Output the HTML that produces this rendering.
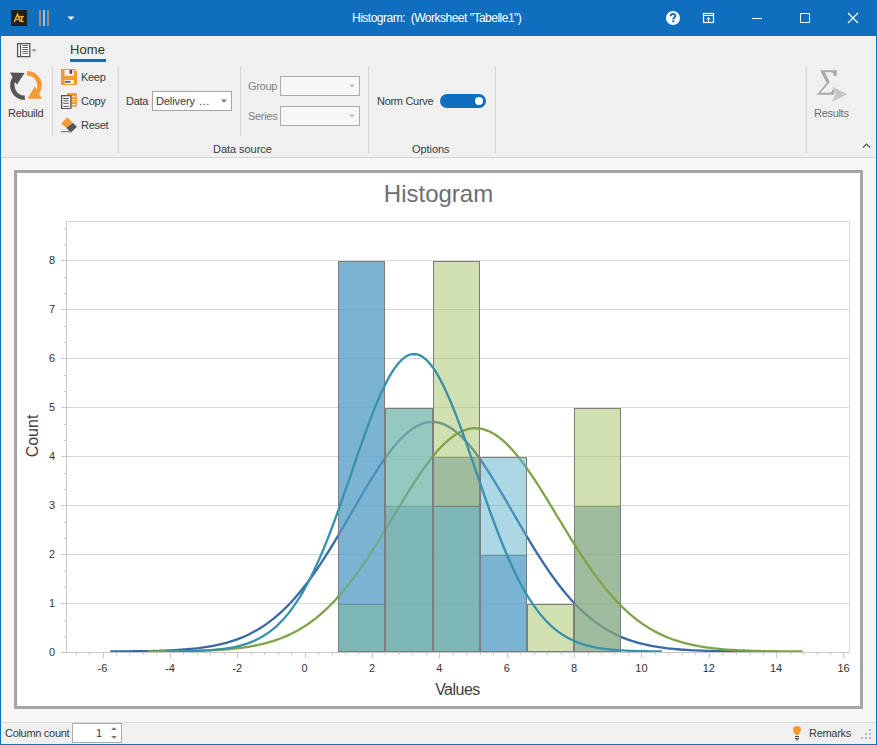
<!DOCTYPE html>
<html><head><meta charset="utf-8"><style>
*{margin:0;padding:0;box-sizing:border-box}
html,body{width:877px;height:745px;overflow:hidden;background:#f0f0f0;font-family:"Liberation Sans", sans-serif;}
.a{position:absolute;white-space:nowrap}
.t11{font-size:11px;letter-spacing:-0.3px;color:#3a3a3a}
</style></head><body>
<div class="a" style="left:0;top:0;width:877px;height:745px;border:1px solid #106ebe;border-top:0"></div>
<!-- title bar -->
<div class="a" style="left:0;top:0;width:877px;height:36px;background:#106ebe"></div>
<div class="a" style="left:11px;top:10px;width:16px;height:16px;background:#231f1b"></div>
<svg class="a" style="left:11px;top:10px" width="16" height="16"><g stroke="#f2a23a" fill="none"><path d="M3.2 12 L6.6 4.3 L9.4 12" stroke-width="1.6"/><path d="M4.8 9.6 H8.2" stroke-width="1.1"/><path d="M7 6.6 H13" stroke-width="1.4"/><path d="M10.6 6.6 V12" stroke-width="1.7"/><path d="M9 11.6 H13" stroke-width="1"/></g></svg>
<div class="a" style="left:39px;top:10px;width:2px;height:16px;background:#a08f74"></div>
<div class="a" style="left:43px;top:10px;width:2px;height:16px;background:#9cc3ea"></div>
<div class="a" style="left:47px;top:10px;width:2px;height:16px;background:#a08f74"></div>
<svg class="a" style="left:67px;top:16px" width="8" height="5"><path d="M0.5 0.5 L7.5 0.5 L4 4 Z" fill="#fff"/></svg>
<div class="a" style="left:352px;top:11px;font-size:12px;letter-spacing:-0.5px;color:#fff">Histogram:&nbsp; (Worksheet "Tabelle1")</div>
<svg class="a" style="left:665px;top:10px" width="16" height="16"><circle cx="8" cy="8" r="7" fill="#fff"/><path d="M5.9 6.2 C5.9 4.7 6.9 3.9 8.1 3.9 C9.4 3.9 10.3 4.7 10.3 5.9 C10.3 7.5 8.3 7.6 8.3 9.5" fill="none" stroke="#106ebe" stroke-width="1.9"/><rect x="7.3" y="10.4" width="2" height="1.9" fill="#106ebe"/></svg>
<svg class="a" style="left:702px;top:12px" width="14" height="13"><rect x="1.5" y="1.5" width="10" height="9" fill="none" stroke="#fff" stroke-width="1.2"/><line x1="1.5" y1="3.5" x2="11.5" y2="3.5" stroke="#fff"/><path d="M6.5 10.5 V5.5 M4.5 7.5 L6.5 5.5 L8.5 7.5" stroke="#fff" fill="none"/></svg>
<div class="a" style="left:752px;top:18px;width:10px;height:1px;background:#fff"></div>
<div class="a" style="left:800px;top:13px;width:10px;height:10px;border:1px solid #fff"></div>
<svg class="a" style="left:847px;top:12px" width="12" height="12"><path d="M1 1 L11 11 M11 1 L1 11" stroke="#fff" stroke-width="1.1"/></svg>

<!-- ribbon -->
<div class="a" style="left:1px;top:36px;width:875px;height:121px;background:#f0f0f0"></div>
<div class="a" style="left:1px;top:157px;width:875px;height:1px;background:#d4d4d4"></div>
<svg class="a" style="left:16px;top:42px" width="24" height="16"><rect x="1.6" y="1.6" width="12.2" height="13" fill="#fff" stroke="#555" stroke-width="1.3"/><line x1="4.6" y1="1.5" x2="4.6" y2="14.5" stroke="#555" stroke-width="1.1"/><path d="M6.4 3.5H12M6.4 5.5H12M6.4 7.5H12M6.4 9.4H12M6.4 11.4H12" stroke="#555" stroke-width="0.9"/><path d="M15.2 7.2 L20.8 7.2 L18 10Z" fill="#9a9a9a"/></svg>
<div class="a" style="left:70px;top:42px;font-size:13px;color:#333;letter-spacing:0.1px">Home</div>
<div class="a" style="left:70px;top:59px;width:36px;height:3px;background:#106ebe"></div>

<!-- separators -->
<div class="a" style="left:52px;top:66px;width:1px;height:70px;background:#d4d4d4"></div>
<div class="a" style="left:118px;top:66px;width:1px;height:87px;background:#d4d4d4"></div>
<div class="a" style="left:240px;top:66px;width:1px;height:70px;background:#d4d4d4"></div>
<div class="a" style="left:368px;top:66px;width:1px;height:87px;background:#d4d4d4"></div>
<div class="a" style="left:495px;top:66px;width:1px;height:87px;background:#d4d4d4"></div>
<div class="a" style="left:806px;top:66px;width:1px;height:87px;background:#d4d4d4"></div>

<!-- rebuild icon -->
<svg class="a" style="left:9px;top:69px" width="34" height="34">
<path d="M15.8 28.7 A12.2 12.2 0 0 1 6.9 7.9" fill="none" stroke="#555" stroke-width="4.6"/>
<path d="M1 3.6 L15.5 4 L7.9 15.8 Z" fill="#555"/>
<path d="M18 4.2 A12.3 12.3 0 0 1 26.9 25.2" fill="none" stroke="#f39a30" stroke-width="4.6"/>
<path d="M18.5 29.8 L33 29.8 L25.7 17.5 Z" fill="#f39a30"/>
</svg>
<div class="a t11" style="left:8px;top:107px">Rebuild</div>

<!-- keep copy reset -->
<svg class="a" style="left:61px;top:69px" width="16" height="16"><path d="M0 0 H13.6 L16 2.4 V16 H0 Z" fill="#f39a30"/><rect x="3.6" y="1" width="9.2" height="5.7" fill="#f4f4f4"/><rect x="8.6" y="1" width="2.6" height="3.8" fill="#4a4a4a"/><rect x="3.6" y="11" width="9.2" height="3.9" fill="#f4f4f4"/><rect x="3.9" y="11.9" width="5.8" height="1.9" fill="#666"/></svg>
<div class="a t11" style="left:81px;top:71px">Keep</div>
<svg class="a" style="left:61px;top:93px" width="16" height="16"><rect x="6" y="0" width="9.9" height="13.7" fill="#f39a30"/><path d="M10.3 3.5H14.6M10.3 6.5H14.6M10.3 8.5H14.6M10.3 11.5H14.6" stroke="#fbe3c4" stroke-width="1"/><rect x="0.65" y="2.65" width="9.2" height="13" fill="#fafafa" stroke="#555" stroke-width="1.3"/><path d="M2.3 5.5H7.8M2.3 7.8H7.8M2.3 10.3H7.8M2.3 13.4H7.8" stroke="#555" stroke-width="1"/></svg>
<div class="a t11" style="left:81px;top:95px">Copy</div>
<svg class="a" style="left:61px;top:117px" width="16" height="16"><path d="M0.1 6.7 L6.3 0.3 L12.1 6.1 L5.2 10.7 Z" fill="#f39a30"/><path d="M5.2 10.7 L12.1 6.1 L15.9 9.8 L10.3 15.2 L9.5 15.2 Z" fill="#555"/><rect x="0" y="13.9" width="10.3" height="1.4" fill="#888"/></svg>
<div class="a t11" style="left:81px;top:119px">Reset</div>

<!-- data -->
<div class="a t11" style="left:126px;top:95px">Data</div>
<div class="a" style="left:152px;top:91px;width:80px;height:20px;background:#fff;border:1px solid #a6a6a6"></div>
<div class="a t11" style="left:156px;top:95px;letter-spacing:-0.1px">Delivery</div><div class="a t11" style="left:199px;top:95px;letter-spacing:0.6px">...</div>
<svg class="a" style="left:221px;top:99px" width="7" height="5"><path d="M0 0.6 H6 L3 3.8 Z" fill="#7a7a7a"/></svg>
<div class="a t11" style="left:213px;top:143px;letter-spacing:-0.05px">Data source</div>

<div class="a t11" style="left:248px;top:80px;color:#808080">Group</div>
<div class="a" style="left:280px;top:76px;width:80px;height:20px;background:#f7f7f7;border:1px solid #ababab"></div>
<svg class="a" style="left:349px;top:84px" width="7" height="5"><path d="M0 0.6 H6 L3 3.8 Z" fill="#c0c0c0"/></svg>
<div class="a t11" style="left:248px;top:110px;color:#808080">Series</div>
<div class="a" style="left:280px;top:106px;width:80px;height:20px;background:#f7f7f7;border:1px solid #ababab"></div>
<svg class="a" style="left:349px;top:114px" width="7" height="5"><path d="M0 0.6 H6 L3 3.8 Z" fill="#c0c0c0"/></svg>

<div class="a t11" style="left:377px;top:95px">Norm Curve</div>
<div class="a" style="left:440px;top:94px;width:46px;height:14px;border-radius:7px;background:#106ebe"></div>
<div class="a" style="left:475px;top:97px;width:8px;height:8px;border-radius:4px;background:#fff"></div>
<div class="a t11" style="left:412px;top:143px;letter-spacing:-0.05px">Options</div>

<svg class="a" style="left:815px;top:68px" width="36" height="36">
<path d="M5.05 2.3 L21.97 2.3 L21.4 7.9 L19 7.9 L18.3 5.6 L16.9 4.2 L9.9 4.2 L14.7 14.1 L5.6 24.85 L15.25 24.85 L16.9 23.4 L17.4 21.6 L19 21.6 L19 26.7 L1.8 26.7 L11.6 15 Z" fill="#a9a9a9"/>
<path d="M17.4 18.4 L32.4 26.2 L17.1 33.7 L20.3 26.3 Z" fill="#c6c6c6"/>
</svg>
<div class="a t11" style="left:814px;top:107px;color:#6e6e6e">Results</div>
<svg class="a" style="left:862px;top:142px" width="10" height="7"><path d="M1 5.5 L4.5 2 L8 5.5" fill="none" stroke="#555" stroke-width="1.1"/></svg>

<!-- content -->
<div class="a" style="left:1px;top:158px;width:875px;height:564px;background:#f7f7f7"></div>
<div class="a" style="left:14px;top:170px;width:849px;height:539px;border:3px solid #a6a6a6;background:#fff"></div>
<svg class="a" style="left:0;top:0" width="877" height="745" font-family="Liberation Sans">
<line x1="66" y1="603.5" x2="850" y2="603.5" stroke="#d9d9d9" stroke-width="1"/>
<line x1="66" y1="554.5" x2="850" y2="554.5" stroke="#d9d9d9" stroke-width="1"/>
<line x1="66" y1="505.5" x2="850" y2="505.5" stroke="#d9d9d9" stroke-width="1"/>
<line x1="66" y1="456.5" x2="850" y2="456.5" stroke="#d9d9d9" stroke-width="1"/>
<line x1="66" y1="407.5" x2="850" y2="407.5" stroke="#d9d9d9" stroke-width="1"/>
<line x1="66" y1="358.5" x2="850" y2="358.5" stroke="#d9d9d9" stroke-width="1"/>
<line x1="66" y1="309.5" x2="850" y2="309.5" stroke="#d9d9d9" stroke-width="1"/>
<line x1="66" y1="260.5" x2="850" y2="260.5" stroke="#d9d9d9" stroke-width="1"/>
<line x1="66" y1="221.5" x2="849.5" y2="221.5" stroke="#d9d9d9"/>
<line x1="849.5" y1="221" x2="849.5" y2="652" stroke="#d9d9d9"/>
<rect x="339" y="262" width="45" height="389" fill="rgb(60, 112, 178)" fill-opacity="0.5"/>
<rect x="338.5" y="261.5" width="46" height="390" fill="none" stroke="#7d7d7d" stroke-width="1"/>
<rect x="386" y="507" width="46" height="144" fill="rgb(60, 112, 178)" fill-opacity="0.5"/>
<rect x="385.5" y="506.5" width="47" height="145" fill="none" stroke="#7d7d7d" stroke-width="1"/>
<rect x="434" y="458" width="45" height="193" fill="rgb(60, 112, 178)" fill-opacity="0.5"/>
<rect x="433.5" y="457.5" width="46" height="194" fill="none" stroke="#7d7d7d" stroke-width="1"/>
<rect x="481" y="556" width="45" height="95" fill="rgb(60, 112, 178)" fill-opacity="0.5"/>
<rect x="480.5" y="555.5" width="46" height="96" fill="none" stroke="#7d7d7d" stroke-width="1"/>
<rect x="575" y="507" width="45" height="144" fill="rgb(60, 112, 178)" fill-opacity="0.5"/>
<rect x="574.5" y="506.5" width="46" height="145" fill="none" stroke="#7d7d7d" stroke-width="1"/>
<polyline fill="none" stroke="#3a6aa5" stroke-width="2.3" stroke-linejoin="round" points="110.27,651.42 113.49,651.41 116.71,651.39 119.93,651.38 123.15,651.36 126.37,651.33 129.59,651.30 132.81,651.27 136.02,651.24 139.24,651.20 142.46,651.15 145.68,651.09 148.90,651.03 152.12,650.96 155.34,650.88 158.56,650.79 161.78,650.69 165.00,650.57 168.22,650.44 171.44,650.29 174.66,650.13 177.88,649.94 181.10,649.73 184.32,649.50 187.54,649.24 190.76,648.95 193.98,648.63 197.20,648.27 200.42,647.87 203.64,647.43 206.86,646.95 210.08,646.41 213.30,645.82 216.52,645.17 219.74,644.46 222.96,643.69 226.18,642.84 229.40,641.91 232.62,640.90 235.84,639.80 239.06,638.62 242.28,637.33 245.50,635.94 248.72,634.44 251.94,632.83 255.16,631.09 258.38,629.23 261.60,627.24 264.82,625.12 268.04,622.85 271.26,620.44 274.48,617.88 277.70,615.17 280.92,612.30 284.14,609.27 287.36,606.08 290.58,602.73 293.80,599.21 297.02,595.53 300.24,591.69 303.45,587.69 306.67,583.52 309.89,579.20 313.11,574.73 316.33,570.12 319.55,565.36 322.77,560.47 325.99,555.46 329.21,550.33 332.43,545.10 335.65,539.78 338.87,534.38 342.09,528.92 345.31,523.40 348.53,517.86 351.75,512.29 354.97,506.73 358.19,501.18 361.41,495.67 364.63,490.22 367.85,484.84 371.07,479.56 374.29,474.39 377.51,469.36 380.73,464.49 383.95,459.79 387.17,455.29 390.39,451.01 393.61,446.96 396.83,443.16 400.05,439.63 403.27,436.39 406.49,433.44 409.71,430.81 412.93,428.50 416.15,426.53 419.37,424.90 422.59,423.63 425.81,422.72 429.03,422.17 432.25,421.98 435.47,422.17 438.69,422.72 441.91,423.63 445.13,424.90 448.35,426.53 451.57,428.50 454.79,430.81 458.01,433.44 461.23,436.39 464.45,439.63 467.67,443.16 470.88,446.96 474.10,451.01 477.32,455.29 480.54,459.79 483.76,464.49 486.98,469.36 490.20,474.39 493.42,479.56 496.64,484.84 499.86,490.22 503.08,495.67 506.30,501.18 509.52,506.73 512.74,512.29 515.96,517.86 519.18,523.40 522.40,528.92 525.62,534.38 528.84,539.78 532.06,545.10 535.28,550.33 538.50,555.46 541.72,560.47 544.94,565.36 548.16,570.12 551.38,574.73 554.60,579.20 557.82,583.52 561.04,587.69 564.26,591.69 567.48,595.53 570.70,599.21 573.92,602.73 577.14,606.08 580.36,609.27 583.58,612.30 586.80,615.17 590.02,617.88 593.24,620.44 596.46,622.85 599.68,625.12 602.90,627.24 606.12,629.23 609.34,631.09 612.56,632.83 615.78,634.44 619.00,635.94 622.22,637.33 625.44,638.62 628.66,639.80 631.88,640.90 635.10,641.91 638.31,642.84 641.53,643.69 644.75,644.46 647.97,645.17 651.19,645.82 654.41,646.41 657.63,646.95 660.85,647.43 664.07,647.87 667.29,648.27 670.51,648.63 673.73,648.95 676.95,649.24 680.17,649.50 683.39,649.73 686.61,649.94 689.83,650.13 693.05,650.29 696.27,650.44 699.49,650.57 702.71,650.69 705.93,650.79 709.15,650.88 712.37,650.96 715.59,651.03 718.81,651.09 722.03,651.15 725.25,651.20 728.47,651.24 731.69,651.27 734.91,651.30 738.13,651.33 741.35,651.36 744.57,651.38 747.79,651.39 751.01,651.41 754.23,651.42"/>
<rect x="339" y="605" width="45" height="46" fill="rgb(163, 193, 99)" fill-opacity="0.5"/>
<rect x="338.5" y="604.5" width="46" height="47" fill="none" stroke="#7d7d7d" stroke-width="1"/>
<rect x="386" y="409" width="46" height="242" fill="rgb(163, 193, 99)" fill-opacity="0.5"/>
<rect x="385.5" y="408.5" width="47" height="243" fill="none" stroke="#7d7d7d" stroke-width="1"/>
<rect x="434" y="262" width="45" height="389" fill="rgb(163, 193, 99)" fill-opacity="0.5"/>
<rect x="433.5" y="261.5" width="46" height="390" fill="none" stroke="#7d7d7d" stroke-width="1"/>
<rect x="528" y="605" width="45" height="46" fill="rgb(163, 193, 99)" fill-opacity="0.5"/>
<rect x="527.5" y="604.5" width="46" height="47" fill="none" stroke="#7d7d7d" stroke-width="1"/>
<rect x="575" y="409" width="45" height="242" fill="rgb(163, 193, 99)" fill-opacity="0.5"/>
<rect x="574.5" y="408.5" width="46" height="243" fill="none" stroke="#7d7d7d" stroke-width="1"/>
<polyline fill="none" stroke="#7fa349" stroke-width="2.3" stroke-linejoin="round" points="148.29,651.43 151.56,651.41 154.83,651.40 158.10,651.38 161.38,651.36 164.65,651.34 167.92,651.31 171.19,651.28 174.46,651.24 177.73,651.20 181.00,651.16 184.27,651.10 187.54,651.04 190.81,650.98 194.09,650.90 197.36,650.81 200.63,650.71 203.90,650.60 207.17,650.47 210.44,650.33 213.71,650.17 216.98,649.98 220.25,649.78 223.52,649.55 226.80,649.30 230.07,649.02 233.34,648.71 236.61,648.36 239.88,647.97 243.15,647.54 246.42,647.07 249.69,646.55 252.96,645.97 256.23,645.34 259.51,644.65 262.78,643.90 266.05,643.07 269.32,642.17 272.59,641.19 275.86,640.12 279.13,638.97 282.40,637.71 285.67,636.36 288.94,634.90 292.22,633.33 295.49,631.64 298.76,629.84 302.03,627.90 305.30,625.83 308.57,623.63 311.84,621.28 315.11,618.79 318.38,616.15 321.65,613.36 324.93,610.41 328.20,607.31 331.47,604.05 334.74,600.63 338.01,597.05 341.28,593.31 344.55,589.42 347.82,585.37 351.09,581.16 354.36,576.81 357.64,572.32 360.91,567.70 364.18,562.94 367.45,558.06 370.72,553.08 373.99,547.99 377.26,542.81 380.53,537.56 383.80,532.24 387.07,526.88 390.35,521.48 393.62,516.07 396.89,510.65 400.16,505.25 403.43,499.89 406.70,494.59 409.97,489.36 413.24,484.22 416.51,479.19 419.78,474.30 423.06,469.56 426.33,464.99 429.60,460.61 432.87,456.44 436.14,452.50 439.41,448.81 442.68,445.37 445.95,442.22 449.22,439.35 452.49,436.79 455.77,434.55 459.04,432.63 462.31,431.05 465.58,429.81 468.85,428.92 472.12,428.39 475.39,428.21 478.66,428.39 481.93,428.92 485.20,429.81 488.48,431.05 491.75,432.63 495.02,434.55 498.29,436.79 501.56,439.35 504.83,442.22 508.10,445.37 511.37,448.81 514.64,452.50 517.91,456.44 521.19,460.61 524.46,464.99 527.73,469.56 531.00,474.30 534.27,479.19 537.54,484.22 540.81,489.36 544.08,494.59 547.35,499.89 550.62,505.25 553.90,510.65 557.17,516.07 560.44,521.48 563.71,526.88 566.98,532.24 570.25,537.56 573.52,542.81 576.79,547.99 580.06,553.08 583.33,558.06 586.61,562.94 589.88,567.70 593.15,572.32 596.42,576.81 599.69,581.16 602.96,585.37 606.23,589.42 609.50,593.31 612.77,597.05 616.04,600.63 619.32,604.05 622.59,607.31 625.86,610.41 629.13,613.36 632.40,616.15 635.67,618.79 638.94,621.28 642.21,623.63 645.48,625.83 648.75,627.90 652.03,629.84 655.30,631.64 658.57,633.33 661.84,634.90 665.11,636.36 668.38,637.71 671.65,638.97 674.92,640.12 678.19,641.19 681.46,642.17 684.74,643.07 688.01,643.90 691.28,644.65 694.55,645.34 697.82,645.97 701.09,646.55 704.36,647.07 707.63,647.54 710.90,647.97 714.17,648.36 717.45,648.71 720.72,649.02 723.99,649.30 727.26,649.55 730.53,649.78 733.80,649.98 737.07,650.17 740.34,650.33 743.61,650.47 746.88,650.60 750.16,650.71 753.43,650.81 756.70,650.90 759.97,650.98 763.24,651.04 766.51,651.10 769.78,651.16 773.05,651.20 776.32,651.24 779.59,651.28 782.87,651.31 786.14,651.34 789.41,651.36 792.68,651.38 795.95,651.40 799.22,651.41 802.49,651.43"/>
<rect x="339" y="262" width="45" height="389" fill="rgb(89, 177, 205)" fill-opacity="0.5"/>
<rect x="338.5" y="261.5" width="46" height="390" fill="none" stroke="#7d7d7d" stroke-width="1"/>
<rect x="386" y="409" width="46" height="242" fill="rgb(89, 177, 205)" fill-opacity="0.5"/>
<rect x="385.5" y="408.5" width="47" height="243" fill="none" stroke="#7d7d7d" stroke-width="1"/>
<rect x="434" y="507" width="45" height="144" fill="rgb(89, 177, 205)" fill-opacity="0.5"/>
<rect x="433.5" y="506.5" width="46" height="145" fill="none" stroke="#7d7d7d" stroke-width="1"/>
<rect x="481" y="458" width="45" height="193" fill="rgb(89, 177, 205)" fill-opacity="0.5"/>
<rect x="480.5" y="457.5" width="46" height="194" fill="none" stroke="#7d7d7d" stroke-width="1"/>
<polyline fill="none" stroke="#3891ab" stroke-width="2.3" stroke-linejoin="round" points="166.11,651.40 168.59,651.38 171.07,651.36 173.54,651.34 176.02,651.31 178.50,651.28 180.98,651.25 183.46,651.21 185.94,651.16 188.42,651.11 190.90,651.04 193.38,650.97 195.85,650.89 198.33,650.80 200.81,650.70 203.29,650.58 205.77,650.45 208.25,650.30 210.73,650.13 213.21,649.94 215.68,649.72 218.16,649.48 220.64,649.21 223.12,648.91 225.60,648.57 228.08,648.20 230.56,647.78 233.04,647.31 235.52,646.80 237.99,646.23 240.47,645.60 242.95,644.90 245.43,644.14 247.91,643.30 250.39,642.38 252.87,641.37 255.35,640.27 257.83,639.07 260.30,637.76 262.78,636.34 265.26,634.80 267.74,633.13 270.22,631.33 272.70,629.39 275.18,627.30 277.66,625.05 280.13,622.64 282.61,620.06 285.09,617.30 287.57,614.37 290.05,611.24 292.53,607.92 295.01,604.41 297.49,600.69 299.97,596.76 302.44,592.63 304.92,588.28 307.40,583.73 309.88,578.96 312.36,573.98 314.84,568.79 317.32,563.39 319.80,557.80 322.28,552.00 324.75,546.02 327.23,539.85 329.71,533.52 332.19,527.02 334.67,520.38 337.15,513.60 339.63,506.70 342.11,499.70 344.58,492.62 347.06,485.47 349.54,478.28 352.02,471.07 354.50,463.86 356.98,456.67 359.46,449.53 361.94,442.46 364.42,435.49 366.89,428.64 369.37,421.94 371.85,415.43 374.33,409.11 376.81,403.02 379.29,397.19 381.77,391.64 384.25,386.39 386.73,381.47 389.20,376.89 391.68,372.69 394.16,368.87 396.64,365.46 399.12,362.47 401.60,359.91 404.08,357.80 406.56,356.16 409.03,354.97 411.51,354.26 413.99,354.02 416.47,354.26 418.95,354.97 421.43,356.16 423.91,357.80 426.39,359.91 428.87,362.47 431.34,365.46 433.82,368.87 436.30,372.69 438.78,376.89 441.26,381.47 443.74,386.39 446.22,391.64 448.70,397.19 451.18,403.02 453.65,409.11 456.13,415.43 458.61,421.94 461.09,428.64 463.57,435.49 466.05,442.46 468.53,449.53 471.01,456.67 473.48,463.86 475.96,471.07 478.44,478.28 480.92,485.47 483.40,492.62 485.88,499.70 488.36,506.70 490.84,513.60 493.32,520.38 495.79,527.02 498.27,533.52 500.75,539.85 503.23,546.02 505.71,552.00 508.19,557.80 510.67,563.39 513.15,568.79 515.63,573.98 518.10,578.96 520.58,583.73 523.06,588.28 525.54,592.63 528.02,596.76 530.50,600.69 532.98,604.41 535.46,607.92 537.94,611.24 540.41,614.37 542.89,617.30 545.37,620.06 547.85,622.64 550.33,625.05 552.81,627.30 555.29,629.39 557.77,631.33 560.24,633.13 562.72,634.80 565.20,636.34 567.68,637.76 570.16,639.07 572.64,640.27 575.12,641.37 577.60,642.38 580.08,643.30 582.55,644.14 585.03,644.90 587.51,645.60 589.99,646.23 592.47,646.80 594.95,647.31 597.43,647.78 599.91,648.20 602.39,648.57 604.86,648.91 607.34,649.21 609.82,649.48 612.30,649.72 614.78,649.94 617.26,650.13 619.74,650.30 622.22,650.45 624.69,650.58 627.17,650.70 629.65,650.80 632.13,650.89 634.61,650.97 637.09,651.04 639.57,651.11 642.05,651.16 644.53,651.21 647.00,651.25 649.48,651.28 651.96,651.31 654.44,651.34 656.92,651.36 659.40,651.38 661.88,651.40"/>
<line x1="66.5" y1="221" x2="66.5" y2="653" stroke="#c8c8c8"/>
<line x1="61" y1="652.5" x2="850" y2="652.5" stroke="#c8c8c8"/>
<line x1="61" y1="652.5" x2="66" y2="652.5" stroke="#c8c8c8"/>
<line x1="61" y1="603.5" x2="66" y2="603.5" stroke="#c8c8c8"/>
<line x1="61" y1="554.5" x2="66" y2="554.5" stroke="#c8c8c8"/>
<line x1="61" y1="505.5" x2="66" y2="505.5" stroke="#c8c8c8"/>
<line x1="61" y1="456.5" x2="66" y2="456.5" stroke="#c8c8c8"/>
<line x1="61" y1="407.5" x2="66" y2="407.5" stroke="#c8c8c8"/>
<line x1="61" y1="358.5" x2="66" y2="358.5" stroke="#c8c8c8"/>
<line x1="61" y1="309.5" x2="66" y2="309.5" stroke="#c8c8c8"/>
<line x1="61" y1="260.5" x2="66" y2="260.5" stroke="#c8c8c8"/>
<line x1="64" y1="636.5" x2="66" y2="636.5" stroke="#c8c8c8"/>
<line x1="64" y1="620.5" x2="66" y2="620.5" stroke="#c8c8c8"/>
<line x1="64" y1="587.5" x2="66" y2="587.5" stroke="#c8c8c8"/>
<line x1="64" y1="571.5" x2="66" y2="571.5" stroke="#c8c8c8"/>
<line x1="64" y1="538.5" x2="66" y2="538.5" stroke="#c8c8c8"/>
<line x1="64" y1="522.5" x2="66" y2="522.5" stroke="#c8c8c8"/>
<line x1="64" y1="489.5" x2="66" y2="489.5" stroke="#c8c8c8"/>
<line x1="64" y1="473.5" x2="66" y2="473.5" stroke="#c8c8c8"/>
<line x1="64" y1="440.5" x2="66" y2="440.5" stroke="#c8c8c8"/>
<line x1="64" y1="424.5" x2="66" y2="424.5" stroke="#c8c8c8"/>
<line x1="64" y1="391.5" x2="66" y2="391.5" stroke="#c8c8c8"/>
<line x1="64" y1="375.5" x2="66" y2="375.5" stroke="#c8c8c8"/>
<line x1="64" y1="342.5" x2="66" y2="342.5" stroke="#c8c8c8"/>
<line x1="64" y1="326.5" x2="66" y2="326.5" stroke="#c8c8c8"/>
<line x1="64" y1="293.5" x2="66" y2="293.5" stroke="#c8c8c8"/>
<line x1="64" y1="277.5" x2="66" y2="277.5" stroke="#c8c8c8"/>
<line x1="64" y1="244.5" x2="66" y2="244.5" stroke="#c8c8c8"/>
<line x1="64" y1="228.5" x2="66" y2="228.5" stroke="#c8c8c8"/>
<line x1="76.5" y1="652" x2="76.5" y2="655" stroke="#c8c8c8"/>
<line x1="89.5" y1="652" x2="89.5" y2="655" stroke="#c8c8c8"/>
<line x1="103.5" y1="652" x2="103.5" y2="658" stroke="#c8c8c8"/>
<line x1="116.5" y1="652" x2="116.5" y2="655" stroke="#c8c8c8"/>
<line x1="129.5" y1="652" x2="129.5" y2="655" stroke="#c8c8c8"/>
<line x1="143.5" y1="652" x2="143.5" y2="655" stroke="#c8c8c8"/>
<line x1="156.5" y1="652" x2="156.5" y2="655" stroke="#c8c8c8"/>
<line x1="170.5" y1="652" x2="170.5" y2="658" stroke="#c8c8c8"/>
<line x1="183.5" y1="652" x2="183.5" y2="655" stroke="#c8c8c8"/>
<line x1="197.5" y1="652" x2="197.5" y2="655" stroke="#c8c8c8"/>
<line x1="210.5" y1="652" x2="210.5" y2="655" stroke="#c8c8c8"/>
<line x1="224.5" y1="652" x2="224.5" y2="655" stroke="#c8c8c8"/>
<line x1="237.5" y1="652" x2="237.5" y2="658" stroke="#c8c8c8"/>
<line x1="251.5" y1="652" x2="251.5" y2="655" stroke="#c8c8c8"/>
<line x1="264.5" y1="652" x2="264.5" y2="655" stroke="#c8c8c8"/>
<line x1="278.5" y1="652" x2="278.5" y2="655" stroke="#c8c8c8"/>
<line x1="291.5" y1="652" x2="291.5" y2="655" stroke="#c8c8c8"/>
<line x1="305.5" y1="652" x2="305.5" y2="658" stroke="#c8c8c8"/>
<line x1="318.5" y1="652" x2="318.5" y2="655" stroke="#c8c8c8"/>
<line x1="332.5" y1="652" x2="332.5" y2="655" stroke="#c8c8c8"/>
<line x1="345.5" y1="652" x2="345.5" y2="655" stroke="#c8c8c8"/>
<line x1="358.5" y1="652" x2="358.5" y2="655" stroke="#c8c8c8"/>
<line x1="372.5" y1="652" x2="372.5" y2="658" stroke="#c8c8c8"/>
<line x1="385.5" y1="652" x2="385.5" y2="655" stroke="#c8c8c8"/>
<line x1="399.5" y1="652" x2="399.5" y2="655" stroke="#c8c8c8"/>
<line x1="412.5" y1="652" x2="412.5" y2="655" stroke="#c8c8c8"/>
<line x1="426.5" y1="652" x2="426.5" y2="655" stroke="#c8c8c8"/>
<line x1="439.5" y1="652" x2="439.5" y2="658" stroke="#c8c8c8"/>
<line x1="453.5" y1="652" x2="453.5" y2="655" stroke="#c8c8c8"/>
<line x1="466.5" y1="652" x2="466.5" y2="655" stroke="#c8c8c8"/>
<line x1="480.5" y1="652" x2="480.5" y2="655" stroke="#c8c8c8"/>
<line x1="493.5" y1="652" x2="493.5" y2="655" stroke="#c8c8c8"/>
<line x1="507.5" y1="652" x2="507.5" y2="658" stroke="#c8c8c8"/>
<line x1="520.5" y1="652" x2="520.5" y2="655" stroke="#c8c8c8"/>
<line x1="534.5" y1="652" x2="534.5" y2="655" stroke="#c8c8c8"/>
<line x1="547.5" y1="652" x2="547.5" y2="655" stroke="#c8c8c8"/>
<line x1="561.5" y1="652" x2="561.5" y2="655" stroke="#c8c8c8"/>
<line x1="574.5" y1="652" x2="574.5" y2="658" stroke="#c8c8c8"/>
<line x1="588.5" y1="652" x2="588.5" y2="655" stroke="#c8c8c8"/>
<line x1="601.5" y1="652" x2="601.5" y2="655" stroke="#c8c8c8"/>
<line x1="614.5" y1="652" x2="614.5" y2="655" stroke="#c8c8c8"/>
<line x1="628.5" y1="652" x2="628.5" y2="655" stroke="#c8c8c8"/>
<line x1="641.5" y1="652" x2="641.5" y2="658" stroke="#c8c8c8"/>
<line x1="655.5" y1="652" x2="655.5" y2="655" stroke="#c8c8c8"/>
<line x1="668.5" y1="652" x2="668.5" y2="655" stroke="#c8c8c8"/>
<line x1="682.5" y1="652" x2="682.5" y2="655" stroke="#c8c8c8"/>
<line x1="695.5" y1="652" x2="695.5" y2="655" stroke="#c8c8c8"/>
<line x1="709.5" y1="652" x2="709.5" y2="658" stroke="#c8c8c8"/>
<line x1="722.5" y1="652" x2="722.5" y2="655" stroke="#c8c8c8"/>
<line x1="736.5" y1="652" x2="736.5" y2="655" stroke="#c8c8c8"/>
<line x1="749.5" y1="652" x2="749.5" y2="655" stroke="#c8c8c8"/>
<line x1="763.5" y1="652" x2="763.5" y2="655" stroke="#c8c8c8"/>
<line x1="776.5" y1="652" x2="776.5" y2="658" stroke="#c8c8c8"/>
<line x1="790.5" y1="652" x2="790.5" y2="655" stroke="#c8c8c8"/>
<line x1="803.5" y1="652" x2="803.5" y2="655" stroke="#c8c8c8"/>
<line x1="817.5" y1="652" x2="817.5" y2="655" stroke="#c8c8c8"/>
<line x1="830.5" y1="652" x2="830.5" y2="655" stroke="#c8c8c8"/>
<line x1="843.5" y1="652" x2="843.5" y2="658" stroke="#c8c8c8"/>
<text x="55" y="655.5" text-anchor="end" font-size="11" fill="#333">0</text>
<text x="55" y="606.5" text-anchor="end" font-size="11" fill="#333">1</text>
<text x="55" y="557.5" text-anchor="end" font-size="11" fill="#333">2</text>
<text x="55" y="508.5" text-anchor="end" font-size="11" fill="#333">3</text>
<text x="55" y="459.5" text-anchor="end" font-size="11" fill="#333">4</text>
<text x="55" y="410.5" text-anchor="end" font-size="11" fill="#333">5</text>
<text x="55" y="361.5" text-anchor="end" font-size="11" fill="#333">6</text>
<text x="55" y="312.5" text-anchor="end" font-size="11" fill="#333">7</text>
<text x="55" y="263.5" text-anchor="end" font-size="11" fill="#333">8</text>
<text x="102.5" y="672" text-anchor="middle" font-size="11" fill="#333">-6</text>
<text x="169.9" y="672" text-anchor="middle" font-size="11" fill="#333">-4</text>
<text x="237.2" y="672" text-anchor="middle" font-size="11" fill="#333">-2</text>
<text x="304.6" y="672" text-anchor="middle" font-size="11" fill="#333">0</text>
<text x="372.0" y="672" text-anchor="middle" font-size="11" fill="#333">2</text>
<text x="439.3" y="672" text-anchor="middle" font-size="11" fill="#333">4</text>
<text x="506.7" y="672" text-anchor="middle" font-size="11" fill="#333">6</text>
<text x="574.0" y="672" text-anchor="middle" font-size="11" fill="#333">8</text>
<text x="641.4" y="672" text-anchor="middle" font-size="11" fill="#333">10</text>
<text x="708.8" y="672" text-anchor="middle" font-size="11" fill="#333">12</text>
<text x="776.1" y="672" text-anchor="middle" font-size="11" fill="#333">14</text>
<text x="843.5" y="672" text-anchor="middle" font-size="11" fill="#333">16</text>
<text x="438.5" y="201.8" text-anchor="middle" font-size="24" fill="#6d6d6d">Histogram</text>
<text x="457.5" y="695" text-anchor="middle" font-size="16" fill="#404040" letter-spacing="-0.5">Values</text>
<text transform="translate(37.5,436) rotate(-90)" text-anchor="middle" font-size="16" fill="#404040">Count</text>
</svg>

<!-- status bar -->
<div class="a" style="left:1px;top:722px;width:875px;height:1px;background:#dadada"></div>
<div class="a t11" style="left:5px;top:727px">Column count</div>
<div class="a" style="left:72px;top:723px;width:50px;height:20px;background:#fff;border:1px solid #ababab"></div>
<div class="a t11" style="left:96px;top:727px">1</div>
<svg class="a" style="left:110px;top:726px" width="8" height="14"><path d="M1 3.9 L4 1.2 L7 3.9Z M1 10 L4 12.8 L7 10Z" fill="#7a7a7a"/></svg>
<svg class="a" style="left:792px;top:725px" width="10" height="16"><path d="M5 1 A4 4 0 0 1 9 5 C9 7 7 8 6.5 10 H3.5 C3 8 1 7 1 5 A4 4 0 0 1 5 1Z" fill="#f39a30"/><path d="M3 11.5H7M3 13.5H7" stroke="#444" stroke-width="1"/><path d="M4 15H6" stroke="#444"/></svg>
<div class="a t11" style="left:809px;top:727px">Remarks</div>
<svg class="a" style="left:858px;top:727px" width="16" height="14"><g fill="#b8b8b8"><rect x="11" y="2" width="2" height="2"/><rect x="7" y="6" width="2" height="2"/><rect x="11" y="6" width="2" height="2"/><rect x="3" y="10" width="2" height="2"/><rect x="7" y="10" width="2" height="2"/><rect x="11" y="10" width="2" height="2"/></g></svg>
<div class="a" style="left:0;top:744px;width:877px;height:1px;background:#106ebe"></div>
<div class="a" style="left:0;top:36px;width:1px;height:709px;background:#106ebe"></div>
<div class="a" style="left:876px;top:36px;width:1px;height:709px;background:#106ebe"></div>
</body></html>
